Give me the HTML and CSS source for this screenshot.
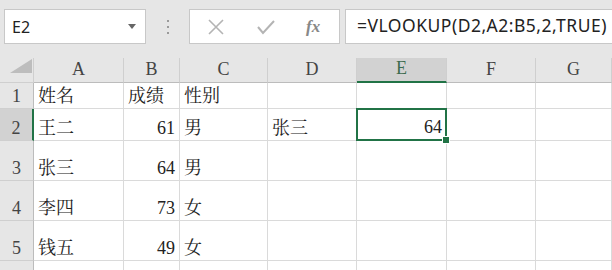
FILE: index.html
```html
<!DOCTYPE html>
<html lang="zh-CN">
<head>
    <meta charset="UTF-8">
    <link rel="stylesheet" href="styles.css">
    <title>VLOOKUP</title>
</head>
<body>
    <div class="toolbar">
        <div class="namebox">
            <span>E2</span>
            <svg class="drop" width="8" height="5" viewBox="0 0 8 5"><path d="M0 0 H8 L4 5 Z" fill="#666"/></svg>
        </div>
        <div class="dots"><i></i><i></i><i></i></div>
        <div class="btns">
            <svg width="20" height="20" viewBox="0 0 20 20"><path d="M3 3 L17 17 M17 3 L3 17" stroke="#b4b4b4" stroke-width="1.6" fill="none"/></svg>
            <svg width="20" height="20" viewBox="0 0 20 20"><path d="M2 10 L7 16 L18 4" stroke="#b4b4b4" stroke-width="2" fill="none"/></svg>
            <span class="fx">fx</span>
        </div>
        <div class="formula">=VLOOKUP(D2,A2:B5,2,TRUE)</div>
    </div>

    <div class="sheet">
        <div class="hd corner"><svg width="22" height="14" viewBox="0 0 22 14"><path d="M22 0 V14 H0 Z" fill="#bdbdbd"/></svg></div>
        <div class="hd col">A</div>
        <div class="hd col">B</div>
        <div class="hd col">C</div>
        <div class="hd col">D</div>
        <div class="hd col sel">E</div>
        <div class="hd col">F</div>
        <div class="hd col">G</div>

        <div class="hd row">1</div>
        <div class="c">姓名</div>
        <div class="c">成绩</div>
        <div class="c">性别</div>
        <div class="c"></div>
        <div class="c"></div>
        <div class="c"></div>
        <div class="c"></div>

        <div class="hd row rsel">2</div>
        <div class="c">王二</div>
        <div class="c num">61</div>
        <div class="c">男</div>
        <div class="c">张三</div>
        <div class="c num active">64<b class="handle"></b></div>
        <div class="c"></div>
        <div class="c"></div>

        <div class="hd row">3</div>
        <div class="c">张三</div>
        <div class="c num">64</div>
        <div class="c">男</div>
        <div class="c"></div>
        <div class="c"></div>
        <div class="c"></div>
        <div class="c"></div>

        <div class="hd row">4</div>
        <div class="c">李四</div>
        <div class="c num">73</div>
        <div class="c">女</div>
        <div class="c"></div>
        <div class="c"></div>
        <div class="c"></div>
        <div class="c"></div>

        <div class="hd row">5</div>
        <div class="c">钱五</div>
        <div class="c num">49</div>
        <div class="c">女</div>
        <div class="c"></div>
        <div class="c"></div>
        <div class="c"></div>
        <div class="c"></div>

        <div class="hd row"></div>
        <div class="c"></div>
        <div class="c"></div>
        <div class="c"></div>
        <div class="c"></div>
        <div class="c"></div>
        <div class="c"></div>
        <div class="c"></div>
    </div>
</body>
</html>
```

FILE: styles.css
```css
* {
    box-sizing: border-box;
}
body {
    margin: 0;
    width: 612px;
    height: 270px;
    overflow: hidden;
    background-color: #e6e6e6;
    font-family: "Liberation Serif", "Noto Serif CJK SC", "Noto Sans CJK SC", serif;
}
.toolbar {
    display: flex;
    align-items: center;
    height: 58px;
    padding: 9px 0 14px 4px;
    font-family: "Noto Sans", "Noto Sans CJK SC", sans-serif;
}
.namebox {
    display: flex;
    align-items: center;
    justify-content: space-between;
    width: 142px;
    height: 35px;
    padding: 0 9px 0 7px;
    background-color: #fff;
    border: 1px solid #c8c8c8;
    font-size: 16px;
    color: #222;
}
.dots {
    display: flex;
    flex-direction: column;
    gap: 4px;
    width: 43px;
    align-items: center;
}
.dots i {
    width: 2px;
    height: 2px;
    background-color: #9a9a9a;
}
.btns {
    display: flex;
    align-items: center;
    width: 151px;
    height: 35px;
    padding-left: 16px;
    gap: 30px;
    background-color: #fff;
    border: 1px solid #c8c8c8;
}
.fx {
    font-family: "Liberation Serif", serif;
    font-style: italic;
    font-weight: bold;
    font-size: 17px;
    color: #888;
}
.formula {
    flex: 1;
    height: 35px;
    margin-left: 5px;
    padding: 3px 0 0 11px;
    background-color: #fff;
    border: 1px solid #c8c8c8;
    border-right: none;
    font-size: 17.5px;
    letter-spacing: 0.5px;
    color: #222;
}
.sheet {
    display: grid;
    grid-template-columns: 34px 90px 56px 88px 89px 90px 89px 1fr;
    grid-template-rows: 25px 26px 32px 40px 40px 40px 20px;
    background-color: #fff;
}
.hd {
    background-color: #e6e6e6;
    color: #444;
    font-size: 18px;
    display: flex;
    align-items: flex-end;
    justify-content: center;
    padding-bottom: 2px;
    border-right: 1px solid #cfcfcf;
    border-bottom: 1px solid #cfcfcf;
}
.corner {
    align-items: flex-end;
    justify-content: flex-end;
    padding: 0 1px 9px 0;
}
.col {
    border-bottom: 1px solid #bcbcbc;
}
.col.sel {
    background-color: #d2d2d2;
    border-bottom: 2px solid #217346;
    color: #3d6b4e;
}
.row {
    padding-bottom: 1px;
    border-right: 1px solid #bcbcbc;
}
.row.rsel {
    background-color: #d2d2d2;
    border-right: 2px solid #217346;
}
.c {
    position: relative;
    display: flex;
    align-items: flex-end;
    padding: 0 4px 1px 4px;
    font-size: 18px;
    color: #222;
    border-right: 1px solid #dadada;
    border-bottom: 1px solid #dadada;
}
.num {
    justify-content: flex-end;
}
.active {
    z-index: 2;
    border: 2px solid #217346;
    margin: -1px 0 0 -1px;
    padding-right: 3px;
}
.handle {
    position: absolute;
    right: -5px;
    bottom: -5px;
    width: 8px;
    height: 8px;
    background-color: #217346;
    border: 1px solid #fff;
}
```
